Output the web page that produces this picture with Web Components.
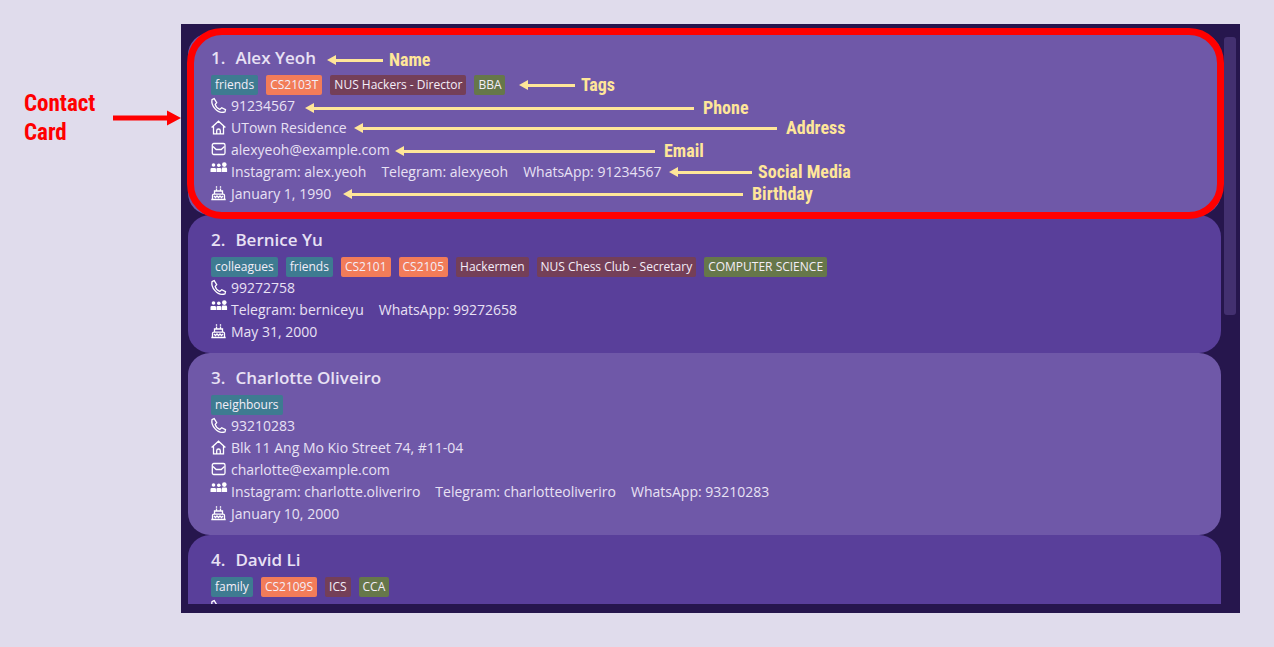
<!DOCTYPE html>
<html lang="en">
<head>
<meta charset="utf-8">
<title>Contact list</title>
<style>
  html { height: 100%; }
  body {
    margin: 0;
    height: 100%;
    background: #e0dcec;
    font-family: "Open Sans", "Noto Sans", sans-serif;
  }
</style>
</head>
<body>
<guide-page>
  <guide-pointer slot="side">Contact<br>Card</guide-pointer>
  <contact-panel>
    <contact-card number="1." name="Alex Yeoh">
      <contact-tag slot="tags" kind="group">friends</contact-tag>
      <contact-tag slot="tags" kind="module">CS2103T</contact-tag>
      <contact-tag slot="tags" kind="cca">NUS Hackers - Director</contact-tag>
      <contact-tag slot="tags" kind="major">BBA</contact-tag>
      <contact-row icon="phone"><span>91234567</span></contact-row>
      <contact-row icon="home"><span>UTown Residence</span></contact-row>
      <contact-row icon="mail"><span>alexyeoh@example.com</span></contact-row>
      <contact-row icon="people"><span>Instagram: alex.yeoh</span><span>Telegram: alexyeoh</span><span>WhatsApp: 91234567</span></contact-row>
      <contact-row icon="cake"><span>January 1, 1990</span></contact-row>
    </contact-card>
    <contact-card number="2." name="Bernice Yu" shade="dark">
      <contact-tag slot="tags" kind="group">colleagues</contact-tag>
      <contact-tag slot="tags" kind="group">friends</contact-tag>
      <contact-tag slot="tags" kind="module">CS2101</contact-tag>
      <contact-tag slot="tags" kind="module">CS2105</contact-tag>
      <contact-tag slot="tags" kind="cca">Hackermen</contact-tag>
      <contact-tag slot="tags" kind="cca">NUS Chess Club - Secretary</contact-tag>
      <contact-tag slot="tags" kind="major">COMPUTER SCIENCE</contact-tag>
      <contact-row icon="phone"><span>99272758</span></contact-row>
      <contact-row icon="people"><span>Telegram: berniceyu</span><span>WhatsApp: 99272658</span></contact-row>
      <contact-row icon="cake"><span>May 31, 2000</span></contact-row>
    </contact-card>
    <contact-card number="3." name="Charlotte Oliveiro">
      <contact-tag slot="tags" kind="group">neighbours</contact-tag>
      <contact-row icon="phone"><span>93210283</span></contact-row>
      <contact-row icon="home"><span>Blk 11 Ang Mo Kio Street 74, #11-04</span></contact-row>
      <contact-row icon="mail"><span>charlotte@example.com</span></contact-row>
      <contact-row icon="people"><span>Instagram: charlotte.oliveriro</span><span>Telegram: charlotteoliveriro</span><span>WhatsApp: 93210283</span></contact-row>
      <contact-row icon="cake"><span>January 10, 2000</span></contact-row>
    </contact-card>
    <contact-card number="4." name="David Li" shade="dark">
      <contact-tag slot="tags" kind="group">family</contact-tag>
      <contact-tag slot="tags" kind="module">CS2109S</contact-tag>
      <contact-tag slot="tags" kind="cca">ICS</contact-tag>
      <contact-tag slot="tags" kind="major">CCA</contact-tag>
      <contact-row icon="phone"></contact-row>
    </contact-card>

    <card-outline slot="notes"></card-outline>
    <field-note slot="notes" style="--x:146px;--y:25px;--length:56px">Name</field-note>
    <field-note slot="notes" style="--x:338px;--y:50px;--length:56px">Tags</field-note>
    <field-note slot="notes" style="--x:124px;--y:73px;--length:389px;--gap:9px">Phone</field-note>
    <field-note slot="notes" style="--x:173px;--y:93px;--length:423px;--gap:9px">Address</field-note>
    <field-note slot="notes" style="--x:214px;--y:116px;--length:260px;--gap:9px">Email</field-note>
    <field-note slot="notes" style="--x:488px;--y:137px;--length:83px">Social Media</field-note>
    <field-note slot="notes" style="--x:162px;--y:159px;--length:400px;--gap:9px">Birthday</field-note>
  </contact-panel>
</guide-page>

<script>
const register = (tag, html) => {
  const template = document.createElement('template');
  template.innerHTML = html;
  customElements.define(tag, class extends HTMLElement {
    constructor() {
      super();
      this.attachShadow({ mode: 'open' }).append(template.content.cloneNode(true));
    }
    connectedCallback() {
      for (const el of this.shadowRoot.querySelectorAll('[data-attr]')) {
        el.textContent = this.getAttribute(el.dataset.attr);
      }
    }
  });
};

register('guide-page', `
  <style>
    :host {
      box-sizing: border-box;
      display: grid;
      grid-template-columns: 181px minmax(0, 1fr);
      grid-template-rows: minmax(0, 1fr);
      height: 100%;
      padding: 24px 34px 34px 0;
    }
  </style>
  <slot name="side"></slot>
  <slot></slot>`);

register('guide-pointer', `
  <style>
    :host {
      display: flex;
      align-items: center;
      justify-content: space-between;
      align-self: start;
      margin-top: 65px;
      padding-left: 24px;
      color: #f00;
      font: bold 23px/29px "Liberation Sans Narrow", "Roboto Condensed", Roboto, sans-serif;
    }
    svg { display: block; fill: currentColor; }
  </style>
  <span><slot></slot></span>
  <svg width="68" height="16" viewBox="0 0 68 16" aria-hidden="true"><path d="M0 5.500h54V.5l14 7.500-14 7.500v-5H0z"/></svg>`);

register('contact-panel', `
  <style>
    :host {
      box-sizing: border-box;
      position: relative;
      display: grid;
      grid-template-columns: minmax(0, 1fr) 12px;
      grid-template-rows: minmax(0, 1fr);
      gap: 3px;
      padding: 9px 4px 9px 7px;
      background: #26164d;
    }
    .list { overflow: hidden; }
    .track { padding-top: 4px; }
    .thumb { height: 49%; border-radius: 3px; background: #433070; }
  </style>
  <div class="list"><slot></slot></div>
  <div class="track"><div class="thumb"></div></div>
  <slot name="notes"></slot>`);

register('contact-card', `
  <style>
    :host {
      display: block;
      padding: 13px 23px 10px;
      border-radius: 22px;
      background: #6f58a8;
      color: #e8e1f4;
    }
    :host([shade="dark"]) { background: #593f9a; }
    h2 {
      display: flex;
      gap: 10px;
      margin: 0 0 5px;
      font-size: 17px;
      font-weight: 600;
      line-height: 24px;
    }
    .tags { display: flex; flex-wrap: wrap; gap: 8px; }
  </style>
  <h2><span data-attr="number"></span><span data-attr="name"></span></h2>
  <div class="tags"><slot name="tags"></slot></div>
  <slot></slot>`);

register('contact-tag', `
  <style>
    :host {
      display: block;
      padding: 0 4px;
      border-radius: 2px;
      font-size: 12px;
      line-height: 20px;
      color: #f4eef8;
    }
    :host([kind="group"]) { background: #3e7b91; }
    :host([kind="module"]) { background: #f27c59; }
    :host([kind="cca"]) { background: #743f58; }
    :host([kind="major"]) { background: #66774a; }
  </style>
  <slot></slot>`);

const icons = {
  phone: '<path d="M1 1.600 3.200.6 5.700 4.700 4.200 6.400c.5 2.300 2.100 4.100 4.500 5l2-1.700 3.800 1.900-.5 2.200c-3.500 1.200-7.500-.2-10-3.200C1.400 7.900.4 4.600 1 1.600z"/>',
  home: '<path d="M.6 7.600 7.500 1.200l6.900 6.400M2.500 6.200v7.600h10V6.200M5.700 13.800v-3a1.800 1.800 0 0 1 3.600 0v3"/>',
  mail: '<rect x="1.300" y="1.500" width="12.700" height="11" rx="1.500"/><path d="m2 4.500 3.200 3h5l3.300-3"/>',
  people: '<g fill="currentColor" stroke="none"><circle cx="2.500" cy="3" r="1.800"/><circle cx="7.800" cy="3.300" r="1.800"/><circle cx="13.300" cy="2.600" r="2.300"/><path d="M-.5 10V7.200Q-.5 6 .7 6h3.200Q5 6 5 7.200V10zM5.500 10V7.200Q5.500 6 6.600 6h2.500q1.100 0 1.100 1.200V10zM10.700 10V7q0-1.400 1.200-1.400h2.900q1.300 0 1.300 1.400v3z"/></g>',
  cake: '<path d="M5.500.2v1.600M9.500.2v1.600M5.500 2.600v2M9.500 2.600v2M3.500 8V5h8v3M1.500 13.300V9.500q0-1.300 1.300-1.300h9.400q1.300 0 1.300 1.300v3.800M.3 13.500h14.400M3 10l1.500 1.500L6 10l1.500 1.500L9 10l1.500 1.500L12 10"/>'
};

const rowTemplate = document.createElement('template');
rowTemplate.innerHTML = `
  <style>
    :host {
      display: flex;
      gap: 4px;
      height: 22px;
      line-height: 22px;
      font-size: 14px;
      white-space: nowrap;
    }
    svg {
      flex: none;
      margin-top: 3px;
      fill: none;
      stroke: #fff;
      color: #fff;
      stroke-width: 1.3;
      overflow: visible;
    }
    :host([icon="people"]) svg { margin-top: 1px; }
    .text { display: flex; gap: 15px; }
  </style>
  <svg width="16" height="16" viewBox="0 0 16 16" aria-hidden="true"></svg>
  <div class="text"><slot></slot></div>`;

customElements.define('contact-row', class extends HTMLElement {
  constructor() {
    super();
    this.attachShadow({ mode: 'open' }).append(rowTemplate.content.cloneNode(true));
  }
  connectedCallback() {
    this.shadowRoot.querySelector('svg').innerHTML = icons[this.getAttribute('icon')];
  }
});

register('card-outline', `
  <style>
    :host {
      position: absolute;
      box-sizing: border-box;
      top: 4px;
      left: 6px;
      right: 16px;
      height: 191px;
      border: 7px solid #f00;
      border-radius: 35px;
    }
  </style>`);

register('field-note', `
  <style>
    :host {
      position: absolute;
      left: var(--x);
      top: var(--y);
      display: flex;
      align-items: center;
      gap: var(--gap, 6px);
      color: #ffe699;
      font: bold 18px/22px "Liberation Sans Narrow", "Roboto Condensed", Roboto, sans-serif;
      white-space: nowrap;
    }
    .arrow { display: flex; align-items: center; width: var(--length); }
    .head { border: solid transparent; border-width: 5px 9px 5px 0; border-right-color: currentColor; }
    .line { flex: 1; height: 3px; background: currentColor; }
  </style>
  <span class="arrow"><span class="head"></span><span class="line"></span></span>
  <span><slot></slot></span>`);
</script>
</body>
</html>
